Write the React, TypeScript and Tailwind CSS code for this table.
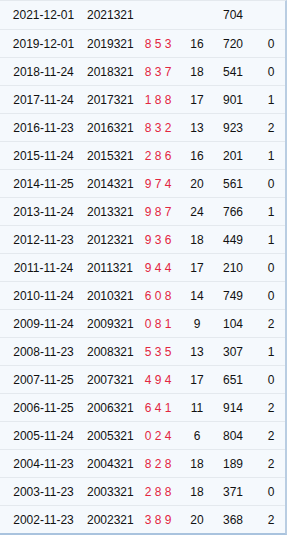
const rows: [string, string, string, string, string, string][] = [
  ['2021-12-01', '2021321', '', '', '704', ''],
  ['2019-12-01', '2019321', '8 5 3', '16', '720', '0'],
  ['2018-11-24', '2018321', '8 3 7', '18', '541', '0'],
  ['2017-11-24', '2017321', '1 8 8', '17', '901', '1'],
  ['2016-11-23', '2016321', '8 3 2', '13', '923', '2'],
  ['2015-11-24', '2015321', '2 8 6', '16', '201', '1'],
  ['2014-11-25', '2014321', '9 7 4', '20', '561', '0'],
  ['2013-11-24', '2013321', '9 8 7', '24', '766', '1'],
  ['2012-11-23', '2012321', '9 3 6', '18', '449', '1'],
  ['2011-11-24', '2011321', '9 4 4', '17', '210', '0'],
  ['2010-11-24', '2010321', '6 0 8', '14', '749', '0'],
  ['2009-11-24', '2009321', '0 8 1', '9', '104', '2'],
  ['2008-11-23', '2008321', '5 3 5', '13', '307', '1'],
  ['2007-11-25', '2007321', '4 9 4', '17', '651', '0'],
  ['2006-11-25', '2006321', '6 4 1', '11', '914', '2'],
  ['2005-11-24', '2005321', '0 2 4', '6', '804', '2'],
  ['2004-11-23', '2004321', '8 2 8', '18', '189', '2'],
  ['2003-11-23', '2003321', '2 8 8', '18', '371', '0'],
  ['2002-11-23', '2002321', '3 8 9', '20', '368', '2'],
];

export default function App() {
  return (
    <div className="w-[291px] h-[538px] bg-white" style={{ fontFamily: '"Liberation Sans", Arial, sans-serif' }}>
      <div className="w-[287px] bg-[#f5f9fd] border-t border-r-2 border-b-2 border-t-[#e4e9ee] border-r-[#b9cde2] border-b-[#a9c3de] text-[12px] text-[#111]">
        {rows.map((r, i) => (
          <div
            key={r[1]}
            className={`grid grid-cols-[87px_43px_56px_22px_50px_26px] h-[28px] items-center ${i > 0 ? 'border-t border-[#e4e9ee]' : ''}`}
          >
            <span className="text-center">{r[0]}</span>
            <span className="text-center">{r[1]}</span>
            <span className="text-center text-[#e3263f] whitespace-pre">{r[2]}</span>
            <span className="text-center">{r[3]}</span>
            <span className="text-center">{r[4]}</span>
            <span className="text-center">{r[5]}</span>
          </div>
        ))}
      </div>
    </div>
  );
}
